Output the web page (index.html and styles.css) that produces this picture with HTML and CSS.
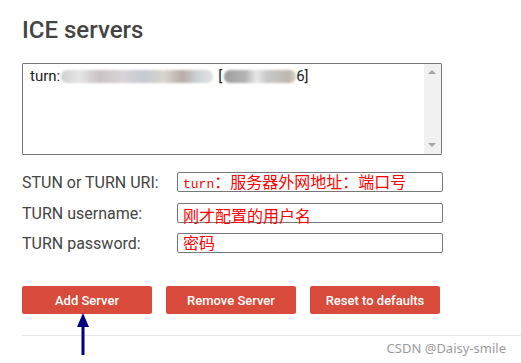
FILE: index.html
```html
<!DOCTYPE html>
<html lang="en">
<head>
  <meta charset="UTF-8" />
  <title>ICE servers</title>
  <link rel="stylesheet" href="styles.css">
</head>
<body>
  <div class="page">
    <h2 class="title">ICE servers</h2>

    <!-- Server list box -->
    <div class="server-list">
      <div class="server-lines">
        <div class="line">turn:<span class="blur blur-long"></span>[<span class="blur blur-short"></span>6]</div>
      </div>
      <div class="scrollbar">
        <span class="arrow-up"></span>
        <span class="arrow-down"></span>
      </div>
    </div>

    <!-- Form rows -->
    <div class="form">
      <div class="row">
        <label class="label">STUN or TURN URI:</label>
        <div class="field"><span class="note"><span class="mono">turn</span>：服务器外网地址：端口号</span></div>
      </div>
      <div class="row">
        <label class="label">TURN username:</label>
        <div class="field"><span class="note note-low">刚才配置的用户名</span></div>
      </div>
      <div class="row">
        <label class="label">TURN password:</label>
        <div class="field"><span class="note">密码</span></div>
      </div>
    </div>

    <div class="buttons">
      <button class="btn">Add Server</button>
      <button class="btn">Remove Server</button>
      <button class="btn">Reset to defaults</button>
    </div>

    <hr class="divider" />
  </div>

  <!-- annotation arrow -->
  <svg class="pointer" width="16" height="42" viewBox="0 0 16 42">
    <polygon points="8,0 2,14 14,14" fill="#000080" />
    <rect x="6.5" y="12" width="3" height="30" fill="#000080" />
  </svg>

  <div class="watermark">CSDN @Daisy-smile</div>
</body>
</html>
```

FILE: styles.css
```css
/* Global */
body {
  margin: 0;
  background: #fff;
  font-family: Roboto, "Liberation Sans", sans-serif;
  color: #444;
}
.page {
  padding: 16px 0 0 22px;
}
.title {
  margin: 0;
  font-size: 24px;
  font-weight: 500;
  line-height: 28px;
  color: #444;
}

/* Server list (textarea look) */
.server-list {
  display: flex;
  width: 418px;
  height: 90px;
  margin-top: 19px;
  border: 1px solid #777;
  border-radius: 1px;
}
.server-lines {
  flex: 1;
  padding: 3px 7px;
}
.line {
  font-size: 15px;
  line-height: 18px;
  color: #222;
  white-space: nowrap;
}
.blur {
  display: inline-block;
  height: 13px;
  vertical-align: -2px;
  border-radius: 6px;
  filter: blur(1.2px);
}
.blur-long {
  width: 152px;
  margin: 0 5px 0 1px;
  background: linear-gradient(90deg, #cfcfcf, #e6e6e6 12%, #c9c2c4 25%, #d8d4d6 40%, #c6c9d2 55%, #d9d6cc 68%, #b8aca8 80%, #cfd3d6 90%, #e3e3e3);
}
.blur-short {
  width: 72px;
  margin: 0 0 0 2px;
  background: linear-gradient(90deg, #9c9c9c, #b5b5b5 30%, #e8e8e8 45%, #c8c8c8 60%, #bdb7b0 90%, #d8d0c8);
}
.scrollbar {
  position: relative;
  width: 17px;
  background: #f1f1f1;
}
.arrow-up,
.arrow-down {
  position: absolute;
  left: 4px;
  width: 0;
  height: 0;
  border-left: 4px solid transparent;
  border-right: 4px solid transparent;
}
.arrow-up {
  top: 6px;
  border-bottom: 4px solid #a3a3a3;
}
.arrow-down {
  bottom: 7px;
  border-top: 4px solid #a3a3a3;
}

/* Form */
.form {
  margin-top: 17px;
}
.row {
  display: flex;
  align-items: center;
  height: 20px;
  margin-bottom: 11px;
}
.row:nth-child(2) {
  margin-bottom: 10px;
}
.label {
  width: 155px;
  font-size: 16px;
  color: #444;
}
.field {
  position: relative;
  width: 264px;
  height: 18px;
  border: 1px solid #777;
  border-radius: 2px;
}
.note {
  position: absolute;
  left: 5px;
  top: -2px;
  font-family: "Noto Sans CJK SC", sans-serif;
  font-size: 16px;
  line-height: 20px;
  color: #f00;
  white-space: nowrap;
}
.note-low {
  top: 1px;
}
.mono {
  font-family: "Liberation Mono", monospace;
  font-size: 13px;
}

/* Buttons */
.buttons {
  display: flex;
  gap: 14px;
  margin-top: 33px;
}
.btn {
  width: 130px;
  height: 28px;
  border: none;
  border-radius: 2px;
  background: #d84a3a;
  color: #fff;
  font-family: Roboto, sans-serif;
  font-size: 13px;
  font-weight: 500;
  padding: 0;
}
.divider {
  margin: 21px 0 0;
  border: none;
  border-top: 1px solid #e6e6e6;
}

/* Overlays */
.pointer {
  position: absolute;
  left: 75px;
  top: 313px;
}
.watermark {
  position: absolute;
  right: 15px;
  top: 339px;
  font-family: "Noto Sans", sans-serif;
  font-size: 13px;
  color: #9a9a9a;
}
```
